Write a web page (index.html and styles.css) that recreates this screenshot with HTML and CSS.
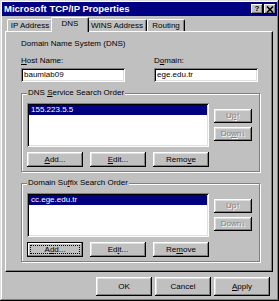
FILE: index.html
```html
<!DOCTYPE html>
<html>
<head>
<meta charset="utf-8">
<link rel="stylesheet" href="styles.css">
</head>
<body>
<div class="window">
  <div class="titlebar">
    <span class="title">Microsoft TCP/IP Properties</span>
    <div class="tbtns">
      <span class="tbtn help">?</span>
      <span class="tbtn close"><svg width="8" height="7" viewBox="0 0 8 7"><path d="M1 0.5 L7 6.5 M7 0.5 L1 6.5" stroke="#000" stroke-width="1.6"/></svg></span>
    </div>
  </div>
  <div class="tabs">
    <div class="tab t-ip">IP Address</div>
    <div class="tab t-dns active">DNS</div>
    <div class="tab t-wins">WINS Address</div>
    <div class="tab t-route">Routing</div>
  </div>
  <div class="panel">
    <div class="heading">Domain Name System (DNS)</div>
    <div class="fields">
      <div class="field host">
        <span class="label"><u>H</u>ost Name:</span>
        <div class="input">baumlab09</div>
      </div>
      <div class="field domain">
        <span class="label">D<u>o</u>main:</span>
        <div class="input">ege.edu.tr</div>
      </div>
    </div>
    <fieldset class="group">
      <legend>DNS <u>S</u>ervice Search Order</legend>
      <div class="g-row">
        <div class="listbox"><div class="item sel">155.223.5.5</div></div>
        <div class="side">
          <div class="btn disabled">U<u>p</u>↑</div>
          <div class="btn disabled">Do<u>w</u>n↓</div>
        </div>
      </div>
      <div class="g-buttons">
        <div class="btn"><u>A</u>dd...</div>
        <div class="btn"><u>E</u>dit...</div>
        <div class="btn">Remo<u>v</u>e</div>
      </div>
    </fieldset>
    <fieldset class="group">
      <legend>Domain Su<u>f</u>fix Search Order</legend>
      <div class="g-row">
        <div class="listbox"><div class="item sel">cc.ege.edu.tr</div></div>
        <div class="side">
          <div class="btn disabled">Up↑</div>
          <div class="btn disabled">Down↓</div>
        </div>
      </div>
      <div class="g-buttons">
        <div class="btn default">A<u>d</u>d...</div>
        <div class="btn">Ed<u>i</u>t...</div>
        <div class="btn">Re<u>m</u>ove</div>
      </div>
    </fieldset>
  </div>
  <div class="footer">
    <div class="btn">OK</div>
    <div class="btn">Cancel</div>
    <div class="btn"><u>A</u>pply</div>
  </div>
</div>
</body>
</html>
```
FILE: styles.css
```css
* { box-sizing: border-box; }
html, body { margin: 0; padding: 0; }
body {
  font-family: "Liberation Sans", Arial, sans-serif;
  font-size: 8px;
  line-height: 10px;
  color: #000;
  background: #c0c0c0;
}
u { text-decoration: underline; text-underline-offset: 1px; }

.window {
  width: 279px;
  height: 301px;
  padding: 2px;
  background: #c0c0c0;
  box-shadow: inset -1px -1px #000, inset 1px 1px #dfdfdf, inset -2px -2px #808080, inset 2px 2px #fff;
  display: flex;
  flex-direction: column;
}

.titlebar {
  height: 14px;
  background: #000080;
  display: flex;
  align-items: center;
  justify-content: space-between;
  padding: 0 1px 0 2px;
  flex: none;
}
.title { color: #fff; font-weight: bold; font-size: 9.5px; line-height: 12px; }
.tbtns { display: flex; gap: 1px; }
.tbtn {
  width: 12px;
  height: 10px;
  background: #c0c0c0;
  box-shadow: inset -1px -1px #000, inset 1px 1px #fff, inset -2px -2px #808080;
  display: flex;
  align-items: center;
  justify-content: center;
  font-weight: bold;
  font-size: 8px;
  line-height: 8px;
}
.tbtn svg { display: block; }

.tabs {
  display: flex;
  align-items: flex-end;
  height: 15px;
  margin-top: 1px;
  margin-bottom: -1px;
  padding-left: 5px;
  position: relative;
  z-index: 1;
  flex: none;
}
.tab {
  height: 12px;
  margin-bottom: 1px;
  border-top: 1px solid #fff;
  border-left: 1px solid #fff;
  border-right: 1px solid #000;
  box-shadow: inset -1px 0 #808080;
  border-radius: 2px 2px 0 0;
  background: #c0c0c0;
  display: flex;
  align-items: center;
  justify-content: center;
  white-space: nowrap;
}
.t-ip { width: 46px; }
.t-dns { width: 38px; }
.t-wins { width: 60px; }
.t-route { width: 38px; }
.tab.active {
  height: 15px;
  margin-bottom: 0;
  margin-left: -2px;
  margin-right: -2px;
  position: relative;
  z-index: 2;
  padding-bottom: 2px;
}

.panel {
  width: 268px;
  height: 241px;
  margin-left: 3px;
  border: 1px solid;
  border-color: #fff #000 #000 #fff;
  box-shadow: inset -1px -1px #808080;
  padding: 7px 0 0 15px;
  display: flex;
  flex-direction: column;
  flex: none;
}

.fields { display: flex; margin-top: 7px; }
.field { display: flex; flex-direction: column; gap: 2px; }
.field.host { width: 133px; }
.input {
  width: 104px;
  height: 14px;
  background: #fff;
  box-shadow: inset 1px 1px #808080, inset -1px -1px #fff, inset 2px 2px #000, inset -2px -2px #dfdfdf;
  padding: 0 3px;
  line-height: 14px;
}

.group {
  margin: 6px 0 0 0;
  width: 239px;
  min-width: 0;
  padding: 5px 7px 4px 5px;
  border: 1px solid #808080;
  box-shadow: inset 1px 1px #fff, 1px 1px #fff;
}
.group legend {
  padding: 0 1px;
  margin: 0;
  line-height: 10px;
  background: #c0c0c0;
}
.g-row { display: flex; gap: 5px; }
.listbox {
  width: 182px;
  height: 44px;
  background: #fff;
  box-shadow: inset 1px 1px #808080, inset -1px -1px #fff, inset 2px 2px #000, inset -2px -2px #dfdfdf;
  padding: 2px;
}
.item { height: 10px; line-height: 10px; padding-left: 2px; }
.item.sel { background: #000080; color: #fff; }
.side {
  display: flex;
  flex-direction: column;
  gap: 4px;
  padding-top: 6px;
  width: 38px;
}

.btn {
  height: 15px;
  background: #c0c0c0;
  box-shadow: inset -1px -1px #000, inset 1px 1px #fff, inset -2px -2px #808080, inset 2px 2px #dfdfdf;
  display: flex;
  align-items: center;
  justify-content: center;
  white-space: nowrap;
}
.side .btn { height: 14px; }
.btn.disabled { color: #808080; text-shadow: 1px 1px 0 #fff; }
.btn.default {
  position: relative;
  box-shadow: inset 0 0 0 1px #000, inset -2px -2px #808080, inset 2px 2px #fff;
}
.btn.default::after {
  content: "";
  position: absolute;
  inset: 3px;
  border: 1px dotted #000;
}
.g-buttons { display: flex; gap: 7px; margin-top: 5px; }
.g-buttons .btn { width: 56px; }

.footer {
  display: flex;
  justify-content: flex-end;
  gap: 3px;
  margin-top: 5px;
  padding-right: 7px;
  flex: none;
}
.footer .btn { width: 56px; height: 19px; }
```
